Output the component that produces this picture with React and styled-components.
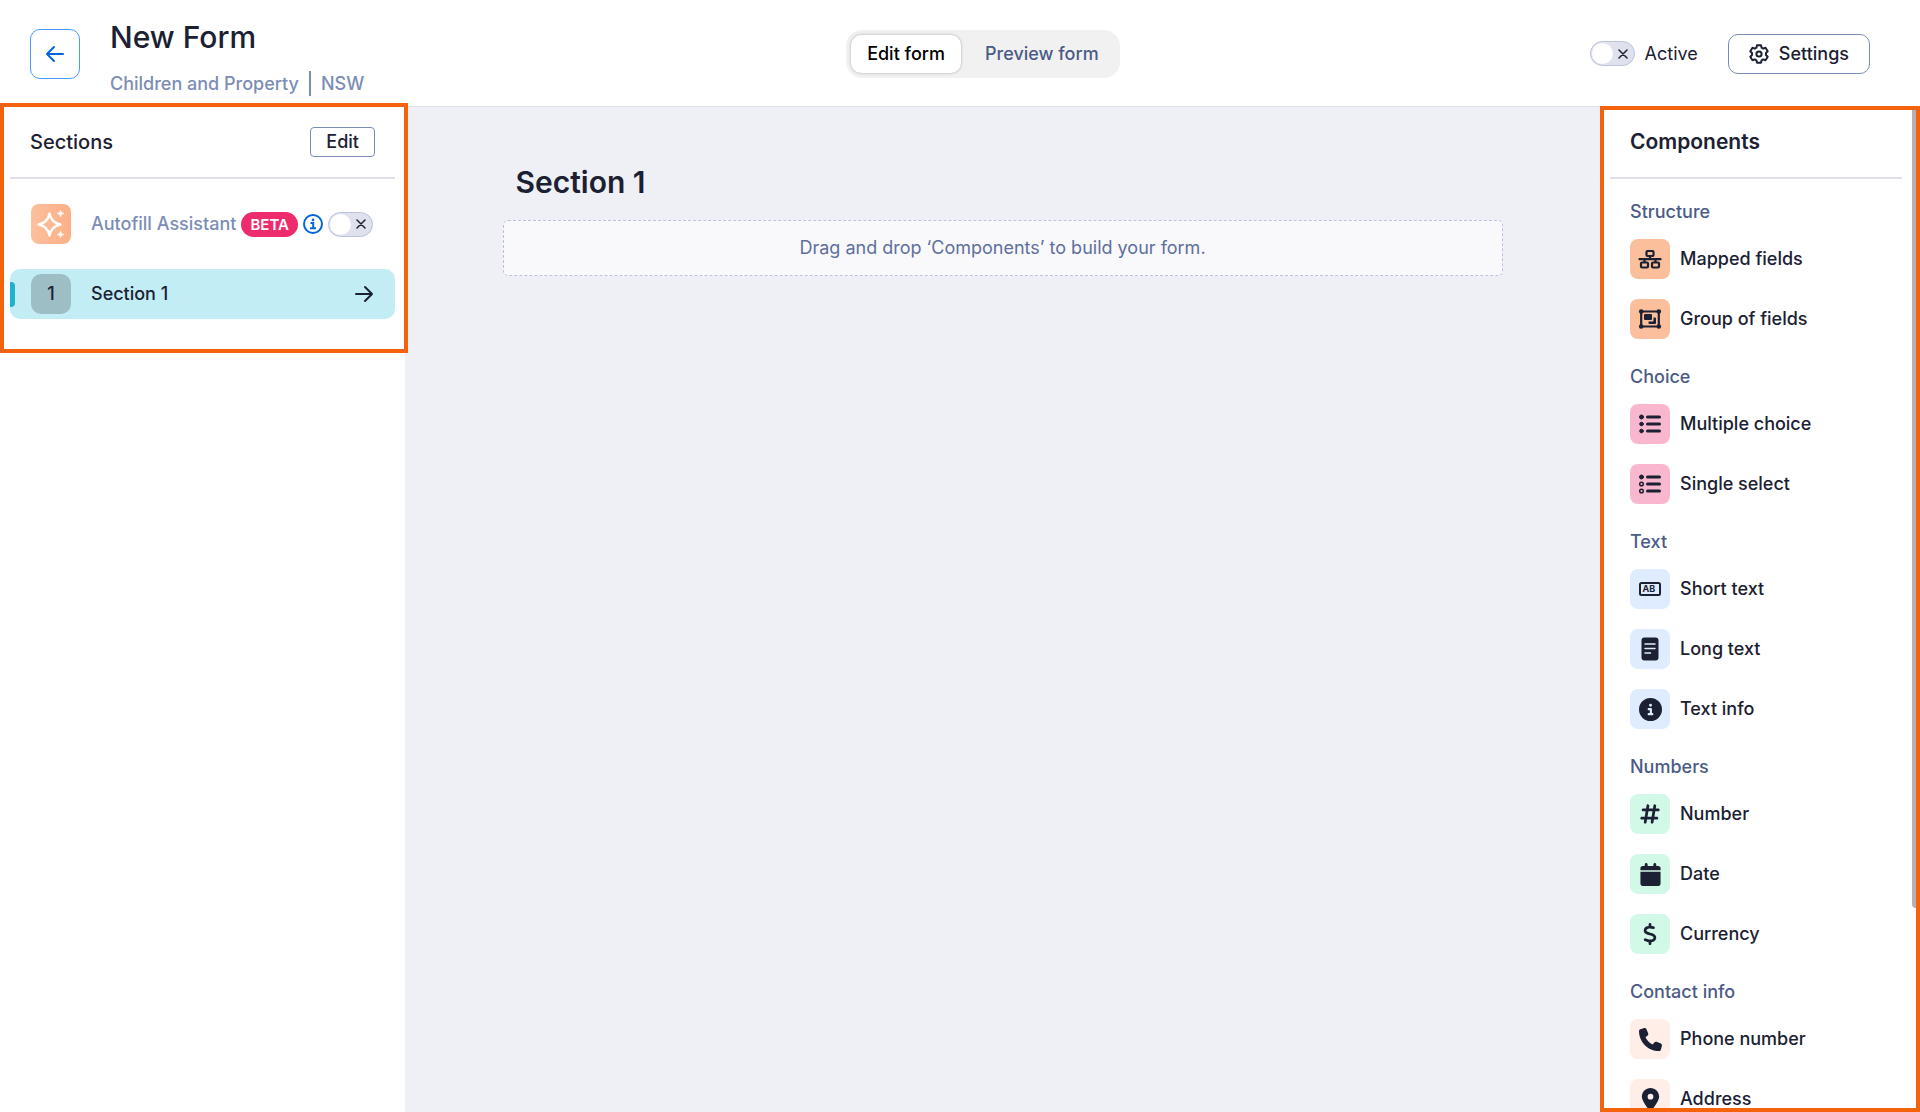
import { useState } from 'react';
import styled, { createGlobalStyle } from 'styled-components';
import {
  FaCalendar,
  FaCircleInfo,
  FaDollarSign,
  FaHashtag,
  FaLocationDot,
  FaPhone,
} from 'react-icons/fa6';

const GlobalStyle = createGlobalStyle`
  * {
    box-sizing: border-box;
  }

  body {
    margin: 0;
    background-color: #fff;
    color: #1b2132;
    font-family: Inter, 'Liberation Sans', sans-serif;
    font-size: 18px;
    line-height: 22px;
  }

  button {
    font: inherit;
    cursor: pointer;
  }

  svg {
    flex: none;
  }

  h1, h2, h3, p, ul {
    margin: 0;
    padding: 0;
  }
`

const Page = styled.div`
  display: flex;
  flex-direction: column;
  height: 100vh;
  overflow: hidden;
`

const Header = styled.header`
  display: flex;
  align-items: center;
  justify-content: space-between;
  flex: none;
  padding: 11px 50px 10px 30px;
  border-bottom: 1px solid #dcdfe9;
`

const HeaderGroup = styled.div`
  display: flex;
  align-items: center;
  gap: 30px;
`

const BackButton = styled.button`
  display: flex;
  align-items: center;
  justify-content: center;
  width: 50px;
  height: 50px;
  padding: 0;
  border: 1px solid #4a9bff;
  border-radius: 10px;
  background-color: #fff;
  color: #0265dc;
`

const Heading = styled.div`
  display: flex;
  flex-direction: column;
  gap: 8px;
  padding-right: 12px;
`

const Title = styled.h1`
  font-size: 30px;
  font-weight: 500;
  line-height: 52px;
`

const Breadcrumb = styled.p`
  display: flex;
  align-items: center;
  color: #7c8db5;
  font-weight: 500;
  line-height: 25px;

  span + span {
    margin-left: 10px;
    padding-left: 10px;
    border-left: 2px solid #7c8db5;
  }
`

const Tabs = styled.div`
  display: flex;
  gap: 8px;
  padding: 5px;
  border-radius: 16px;
  background-color: #f1f1f1;
`

const Tab = styled.button`
  padding: 8px 16px;
  border: 0;
  border-radius: 10px;
  background-color: ${({ $active }) => ($active ? '#fff' : 'transparent')};
  box-shadow: ${({ $active }) => ($active ? '0 0 3px rgba(0, 0, 0, 0.3)' : 'none')};
  color: ${({ $active }) => ($active ? '#000' : '#4b5b86')};
  font-weight: 500;
`

const SwitchLabel = styled.label`
  display: flex;
  align-items: center;
  gap: 10px;
`

const SwitchTrack = styled.span`
  display: flex;
  align-items: center;
  justify-content: space-between;
  width: 45px;
  height: 25px;
  padding: 0 6px 0 1px;
  border: 1px solid #bcc3dc;
  border-radius: 13px;
  background-color: #dfe1ed;
  flex-direction: ${({ $on }) => ($on ? 'row-reverse' : 'row')};
`

const SwitchKnob = styled.span`
  width: 21px;
  height: 21px;
  border-radius: 50%;
  background-color: #fff;
`

const SwitchInput = styled.input`
  position: absolute;
  opacity: 0;
`

const SettingsButton = styled.button`
  display: flex;
  align-items: center;
  gap: 10px;
  padding: 8px 20px;
  border: 1px solid #7c8db5;
  border-radius: 10px;
  background-color: #fff;
  color: #1b2132;
  font-weight: 500;
`

const Body = styled.div`
  display: flex;
  flex: 1;
  min-height: 0;
`

const Sidebar = styled.aside`
  flex: none;
  width: 405px;
`

const SectionsPanel = styled.section`
  position: relative;
  padding: 0 10px 34px;

  &::after {
    content: '';
    position: absolute;
    inset: -4px -3px 0 0;
    border: 4px solid #f4620b;
    pointer-events: none;
  }
`

const PanelHeader = styled.div`
  display: flex;
  align-items: center;
  justify-content: space-between;
  height: 72px;
  padding: 0 20px;
  border-bottom: 2px solid #dfe0ee;
`

const PanelTitle = styled.h2`
  font-size: 20px;
  font-weight: 500;
`

const EditButton = styled.button`
  padding: 3px 15px;
  border: 1px solid #7c8db5;
  border-radius: 4px;
  background-color: #fff;
  color: #1b2132;
  font-weight: 500;
`

const SectionList = styled.div`
  display: flex;
  flex-direction: column;
  gap: 20px;
  padding-top: 20px;
`

const AssistantRow = styled.div`
  display: flex;
  align-items: center;
  gap: 5px;
  height: 50px;
  padding: 0 18px 0 21px;
  white-space: nowrap;
`

const AssistantIcon = styled.span`
  display: flex;
  align-items: center;
  justify-content: center;
  width: 40px;
  height: 40px;
  margin-right: 15px;
  border-radius: 8px;
  background: linear-gradient(90deg, #fdbf9c, #fbb088);
`

const AssistantName = styled.span`
  color: #7c8db5;
  font-weight: 500;
`

const Beta = styled.span`
  padding: 0 9px;
  border-radius: 13px;
  background-color: #ee2b6c;
  color: #fff;
  font-size: 15px;
  font-weight: 600;
  line-height: 25px;
`

const InfoButton = styled.button`
  display: flex;
  padding: 0;
  border: 0;
  background: none;
  color: #0265dc;
`

const SectionButton = styled.button`
  display: flex;
  align-items: center;
  gap: 20px;
  height: 50px;
  padding: 0 21px 0 0;
  border: 0;
  border-radius: 10px;
  background-color: #c3edf5;
  color: #1b2132;
  font-weight: 500;
  text-align: left;
`

const ActiveMark = styled.span`
  width: 5px;
  height: 25px;
  margin-right: -4px;
  border-radius: 0 4px 4px 0;
  background-color: #1fb2cd;
`

const SectionNumber = styled.span`
  width: 40px;
  border-radius: 10px;
  background-color: #9cbec4;
  line-height: 40px;
  text-align: center;
`

const SectionName = styled.span`
  flex: 1;
`

const Canvas = styled.main`
  flex: 1;
  padding: 53px 40px;
  background-color: #eff0f6;
`

const CanvasInner = styled.div`
  max-width: 1000px;
  margin: 0 auto;
`

const SectionTitle = styled.h2`
  padding: 0 13px;
  font-size: 30px;
  font-weight: 600;
  line-height: 44px;
`

const DropZone = styled.p`
  margin-top: 16px;
  padding: 16px;
  border: 1px dashed #bcc0da;
  border-radius: 5px;
  background-color: #f9f9fc;
  color: #5f6f9c;
  text-align: center;
`

const ComponentsPanel = styled.aside`
  position: relative;
  flex: none;
  width: 320px;
  margin-top: -1px;
  padding: 0 14px 0 6px;
  border: 4px solid #f4620b;
  background-color: #fff;
  overflow: hidden;
`

const ComponentsHeader = styled(PanelHeader)`
  height: 69px;
  padding-bottom: 4px;
`

const ComponentsTitle = styled(PanelTitle)`
  font-size: 21px;
  font-weight: 600;
`

const ScrollThumb = styled.span`
  position: absolute;
  top: 0;
  right: 0;
  width: 4px;
  height: 80%;
  border-radius: 0 0 0 4px;
  background-color: #b1b3b5;
`

const Group = styled.section`
  padding: 22px 20px 5px;
`

const GroupTitle = styled.h3`
  color: #4b5b86;
  font-size: 18px;
  font-weight: 500;
`

const GroupItems = styled.ul`
  display: flex;
  flex-direction: column;
  gap: 20px;
  padding-top: 16px;
  list-style: none;
`

const ComponentButton = styled.button`
  display: flex;
  align-items: center;
  gap: 10px;
  width: 100%;
  padding: 0;
  border: 0;
  background: none;
  color: #1b2132;
  font-weight: 500;
`

const IconTile = styled.span`
  display: flex;
  align-items: center;
  justify-content: center;
  width: 40px;
  height: 40px;
  border-radius: 8px;
  background-color: ${({ $color }) => $color};
`

function ArrowIcon({ left }) {
  return (
    <svg width="20" height="20" viewBox="0 0 20 20" fill="none" stroke="currentColor" strokeWidth="2" strokeLinecap="round" strokeLinejoin="round">
      {left
        ? <path d="M18 10H2M9 3 2 10l7 7" />
        : <path d="M2 10h16M11 3l7 7-7 7" />}
    </svg>
  )
}

function CrossIcon() {
  return (
    <svg width="10" height="10" viewBox="0 0 10 10" stroke="#1b2132" strokeWidth="1.5" strokeLinecap="round">
      <path d="m1 1 8 8M9 1 1 9" />
    </svg>
  )
}

function GearIcon() {
  return (
    <svg width="20" height="20" viewBox="0 0 20 20" fill="none" stroke="currentColor" strokeWidth="2" strokeLinejoin="round">
      <path d="M8 1.3h4l.6 2.4 1.500.9 2.4-.8 2.2 3.400-1.700 1.800v2l1.700 1.800-2.200 3.400-2.400-.8-1.500.9-.6 2.400H8l-.6-2.400-1.500-.9-2.400.8-2.200-3.400L3 11V9L1.300 7.200l2.200-3.400 2.400.8 1.500-.9Z" />
      <circle cx="10" cy="10" r="2.6" />
    </svg>
  )
}

function SparkleIcon() {
  return (
    <svg width="28" height="28" viewBox="0 0 28 28" fill="none" stroke="#fff" strokeWidth="2.4" strokeLinejoin="round">
      <path d="M12.5 3.5c1 6 4 9.500 11 11-7 1.500-10 5-11 11-1-6-4-9.500-11-11 7-1.500 10-5 11-11Z" />
      <path d="M23.500 0c.4 2 1.200 3 3.500 3.500-2.300.5-3.100 1.500-3.500 3.500-.4-2-1.200-3-3.500-3.500 2.300-.5 3.100-1.500 3.500-3.500ZM23.500 21c.4 2 1.200 3 3.500 3.500-2.300.5-3.100 1.500-3.500 3.500-.4-2-1.200-3-3.500-3.500 2.300-.5 3.100-1.500 3.500-3.500Z" fill="#fff" strokeWidth="0.5" />
    </svg>
  )
}

function InfoIcon() {
  return (
    <svg width="20" height="20" viewBox="0 0 20 20" fill="none" stroke="currentColor" strokeWidth="2">
      <circle cx="10" cy="10" r="9" />
      <path d="M7.5 9h2.700v5M7 14.200h6" />
      <circle cx="10" cy="5.900" r="1.300" fill="currentColor" stroke="none" />
    </svg>
  )
}

function MappedIcon() {
  return (
    <svg width="24" height="20" viewBox="0 0 24 20" fill="none" stroke="currentColor" strokeWidth="2.2" strokeLinecap="round" strokeLinejoin="round">
      <rect x="8.5" y="2" width="7" height="5" rx="1" />
      <rect x="3" y="13.500" width="7" height="5" rx="1" />
      <rect x="14" y="13.500" width="7" height="5" rx="1" />
      <path d="M1.500 10.200h21M12 7v3M6.500 10v3M17.500 10v3" />
    </svg>
  )
}

function GroupIcon() {
  return (
    <svg width="24" height="20" viewBox="0 0 24 20" fill="currentColor">
      <path d="M3.200 2.500h17.600v15H3.200Z" fill="none" stroke="currentColor" strokeWidth="2.200" />
      <circle cx="3.200" cy="2.500" r="2.300" />
      <circle cx="20.800" cy="2.500" r="2.300" />
      <circle cx="3.200" cy="17.500" r="2.300" />
      <circle cx="20.800" cy="17.500" r="2.300" />
      <rect x="6" y="5" width="8" height="6" rx="1" />
      <path d="M15.500 8.500H17a1 1 0 0 1 1 1V14a1 1 0 0 1-1 1h-5.500a1 1 0 0 1-1-1v-1.500h4a1 1 0 0 0 1-1Z" />
    </svg>
  )
}

function ListIcon({ hollow }) {
  return (
    <svg width="24" height="20" viewBox="0 0 24 20" fill="currentColor" stroke="currentColor" strokeLinecap="round">
      <path d="M9.500 3h12M9.500 10h12M9.500 17h12" strokeWidth="3" />
      <circle cx="3.500" cy="3" r="2" />
      <circle cx="3.500" cy="10" r="1.800" fill={hollow ? 'none' : 'currentColor'} strokeWidth={hollow ? 1.5 : 1} />
      <circle cx="3.500" cy="17" r="1.800" fill={hollow ? 'none' : 'currentColor'} strokeWidth={hollow ? 1.5 : 1} />
    </svg>
  )
}

function ShortTextIcon() {
  return (
    <svg width="24" height="16" viewBox="0 0 24 16">
      <rect x="2" y="2" width="20" height="12" rx="1.500" fill="none" stroke="currentColor" strokeWidth="2" />
      <text x="4.500" y="11.200" fontSize="9" fontWeight="700" fill="currentColor">AB</text>
    </svg>
  )
}

function LongTextIcon() {
  return (
    <svg width="18" height="24" viewBox="0 0 18 24">
      <rect x="0.500" y="0.500" width="17" height="23" rx="3" fill="currentColor" />
      <path d="M4 7h10M4 11.500h10M4 16h5.500" stroke="#dfecff" strokeWidth="1.500" strokeLinecap="round" />
    </svg>
  )
}

const groups = [
  {
    title: 'Structure',
    color: '#fbbf9c',
    items: [
      { name: 'Mapped fields', icon: <MappedIcon /> },
      { name: 'Group of fields', icon: <GroupIcon /> },
    ],
  },
  {
    title: 'Choice',
    color: '#f9b7cf',
    items: [
      { name: 'Multiple choice', icon: <ListIcon /> },
      { name: 'Single select', icon: <ListIcon hollow /> },
    ],
  },
  {
    title: 'Text',
    color: '#dfecff',
    items: [
      { name: 'Short text', icon: <ShortTextIcon /> },
      { name: 'Long text', icon: <LongTextIcon /> },
      { name: 'Text info', icon: <FaCircleInfo size={23} /> },
    ],
  },
  {
    title: 'Numbers',
    color: '#d2f8e8',
    items: [
      { name: 'Number', icon: <FaHashtag size={22} /> },
      { name: 'Date', icon: <FaCalendar size={23} /> },
      { name: 'Currency', icon: <FaDollarSign size={22} /> },
    ],
  },
  {
    title: 'Contact info',
    color: '#feeee7',
    items: [
      { name: 'Phone number', icon: <FaPhone size={23} /> },
      { name: 'Address', icon: <FaLocationDot size={23} /> },
    ],
  },
]

function Switch({ label, children }) {
  const [on, setOn] = useState(false)

  return (
    <SwitchLabel>
      <SwitchInput type="checkbox" role="switch" aria-label={label} checked={on} onChange={() => setOn(!on)} />
      <SwitchTrack $on={on}>
        <SwitchKnob />
        {!on && <CrossIcon />}
      </SwitchTrack>
      {children}
    </SwitchLabel>
  )
}

export default function App() {
  const [tab, setTab] = useState('Edit form')

  return (
    <Page>
      <GlobalStyle />

      <Header>
        <HeaderGroup>
          <BackButton aria-label="Back"><ArrowIcon left /></BackButton>
          <Heading>
            <Title>New Form</Title>
            <Breadcrumb>
              <span>Children and Property</span>
              <span>NSW</span>
            </Breadcrumb>
          </Heading>
        </HeaderGroup>

        <Tabs>
          {['Edit form', 'Preview form'].map((name) => (
            <Tab key={name} $active={tab === name} onClick={() => setTab(name)}>{name}</Tab>
          ))}
        </Tabs>

        <HeaderGroup>
          <Switch>Active</Switch>
          <SettingsButton><GearIcon />Settings</SettingsButton>
        </HeaderGroup>
      </Header>

      <Body>
        <Sidebar>
          <SectionsPanel>
            <PanelHeader>
              <PanelTitle>Sections</PanelTitle>
              <EditButton>Edit</EditButton>
            </PanelHeader>
            <SectionList>
              <AssistantRow>
                <AssistantIcon><SparkleIcon /></AssistantIcon>
                <AssistantName>Autofill Assistant</AssistantName>
                <Beta>BETA</Beta>
                <InfoButton aria-label="About Autofill Assistant"><InfoIcon /></InfoButton>
                <Switch label="Autofill Assistant" />
              </AssistantRow>
              <SectionButton>
                <ActiveMark />
                <SectionNumber>1</SectionNumber>
                <SectionName>Section 1</SectionName>
                <ArrowIcon />
              </SectionButton>
            </SectionList>
          </SectionsPanel>
        </Sidebar>

        <Canvas>
          <CanvasInner>
            <SectionTitle>Section 1</SectionTitle>
            <DropZone>Drag and drop ‘Components’ to build your form.</DropZone>
          </CanvasInner>
        </Canvas>

        <ComponentsPanel>
          <ComponentsHeader>
            <ComponentsTitle>Components</ComponentsTitle>
          </ComponentsHeader>
          {groups.map((group) => (
            <Group key={group.title}>
              <GroupTitle>{group.title}</GroupTitle>
              <GroupItems>
                {group.items.map((item) => (
                  <li key={item.name}>
                    <ComponentButton>
                      <IconTile $color={group.color}>{item.icon}</IconTile>
                      {item.name}
                    </ComponentButton>
                  </li>
                ))}
              </GroupItems>
            </Group>
          ))}
          <ScrollThumb />
        </ComponentsPanel>
      </Body>
    </Page>
  )
}
